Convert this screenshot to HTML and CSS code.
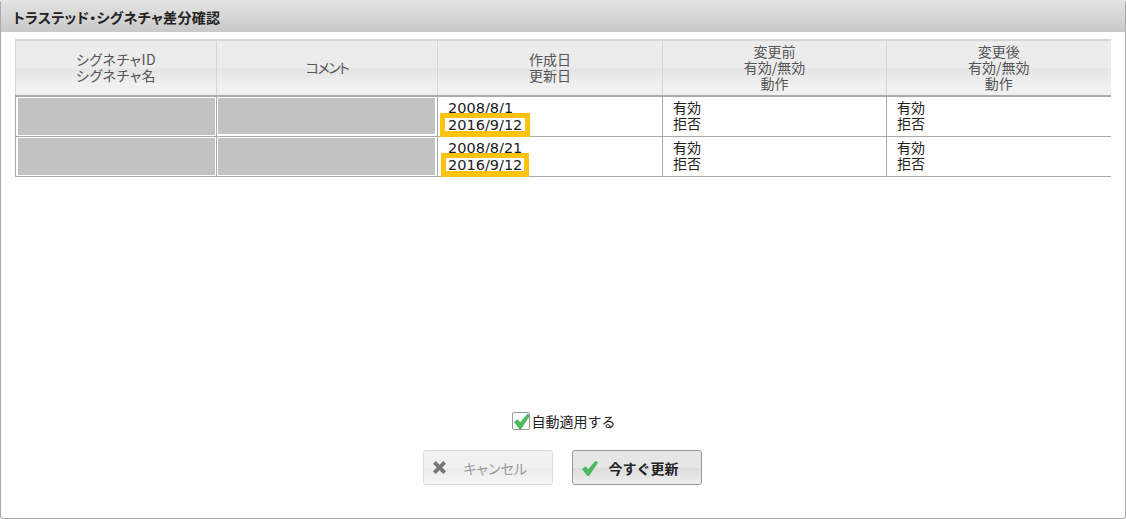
FILE: index.html
```html
<!DOCTYPE html>
<html lang="ja">
<head>
    <meta charset="UTF-8">
    <title>トラステッド・シグネチャ差分確認</title>
    <link rel="stylesheet" href="styles.css">
</head>
<body>
    <div class="dialog">
        <div class="dialog-title">トラステッド・シグネチャ差分確認</div>
        <div class="dialog-body">
            <table class="diff-table">
                <colgroup>
                    <col class="col-id">
                    <col class="col-comment">
                    <col class="col-date">
                    <col class="col-before">
                    <col class="col-after">
                </colgroup>
                <thead>
                    <tr>
                        <th class="th-id">シグネチャID<br>シグネチャ名</th>
                        <th class="th-comment">コメント</th>
                        <th>作成日<br>更新日</th>
                        <th>変更前<br>有効/無効<br>動作</th>
                        <th>変更後<br>有効/無効<br>動作</th>
                    </tr>
                </thead>
                <tbody>
                    <tr>
                        <td class="masked"><div class="mask"></div></td>
                        <td class="masked masked-comment"><div class="mask mask-short"></div></td>
                        <td><span class="date">2008/8/1</span><br><span class="date mark">2016/9/12</span></td>
                        <td>有効<br>拒否</td>
                        <td>有効<br>拒否</td>
                    </tr>
                    <tr>
                        <td class="masked"><div class="mask"></div></td>
                        <td class="masked masked-comment"><div class="mask"></div></td>
                        <td><span class="date">2008/8/21</span><br><span class="date mark mark-narrow">2016/9/12</span></td>
                        <td>有効<br>拒否</td>
                        <td>有効<br>拒否</td>
                    </tr>
                </tbody>
            </table>
            <label class="auto-apply">
                <span class="checkbox">
                    <svg class="check" viewBox="0 0 20 20"><path d="M1 11l4-3 3 3.500L16 2l3 2-10 15H7z"/></svg>
                </span>自動適用する
            </label>
            <div class="button-row">
                <button class="btn btn-cancel" disabled>
                    <svg class="icon-x" viewBox="0 0 12 12"><path d="M0 2.500L2.500 0 6 3.500 9.500 0 12 2.500 8.500 6 12 9.500 9.500 12 6 8.500 2.500 12 0 9.500 3.500 6z"/></svg>
                    キャンセル
                </button>
                <button class="btn btn-update">
                    <svg class="check" viewBox="0 0 20 20"><path d="M1 11l4-3 3 3.500L16 2l3 2-10 15H7z"/></svg>
                    今すぐ更新
                </button>
            </div>
        </div>
    </div>
</body>
</html>
```

FILE: styles.css
```css
html, body {
    height: 100%;
}
body {
    margin: 0;
    background: #fff;
    color: #222;
    font-family: "Noto Sans CJK JP", sans-serif;
    font-size: 14px;
}
.dialog {
    box-sizing: border-box;
    height: 519px;
    width: 1126px;
    display: flex;
    flex-direction: column;
    border: 1px solid #aaa;
    border-top: none;
    border-radius: 3px;
}
.dialog-title {
    height: 32px;
    line-height: 35px;
    padding-left: 12px;
    flex: none;
    font-size: 14px;
    font-weight: bold;
    font-feature-settings: "palt";
    letter-spacing: 0.300px;
    color: #222;
    background: linear-gradient(#e4e4e4, #c8c8c8);
}
.dialog-body {
    flex: 1;
    display: flex;
    flex-direction: column;
    padding: 7px 16px 33px 14px;
}
.diff-table {
    align-self: flex-start;
    width: 1095px;
    table-layout: fixed;
    border-collapse: collapse;
    line-height: 16px;
}
.col-id { width: 201px; }
.col-comment { width: 221px; }
.col-date { width: 225px; }
.col-before { width: 224px; }
.col-after { width: 224px; }
.diff-table th {
    height: 52px;
    padding: 0 0 2px;
    font-size: 14px;
    font-weight: normal;
    font-feature-settings: "palt";
    color: #555;
    border: 1px solid #d6d6d6;
    border-top-width: 2px;
    border-right: none;
    border-bottom: 2px solid #aaa;
    background: linear-gradient(#ececec 50%, #e4e4e4 52%, #f0f0f0 80%);
}
.diff-table th.th-id {
    letter-spacing: 0.500px;
}
.diff-table th.th-comment {
    letter-spacing: -1.500px;
}
.diff-table td {
    height: 40px;
    padding: 2px 10px 0;
    box-sizing: border-box;
    vertical-align: top;
    border-left: 1px solid #aaa;
    border-bottom: 1px solid #aaa;
}
.diff-table td.masked {
    padding: 1px 1px 1px 2px;
}
.diff-table td.masked-comment {
    padding: 1px 2px 1px 1px;
}
.mask {
    height: 37px;
    background: #c2c2c2;
}
.mask-short {
    height: 36px;
}
.date {
    font-family: "DejaVu Sans", sans-serif;
    font-size: 14.500px;
}
.mark {
    position: relative;
}
.mark::after {
    content: "";
    position: absolute;
    left: -8px;
    right: -8px;
    top: -4px;
    bottom: -4px;
    border: 5px solid #ffc30f;
    border-bottom-width: 6px;
}
.mark-narrow::after {
    left: -7px;
    right: -7px;
}
.auto-apply {
    margin-top: auto;
    margin-left: 3px;
    align-self: center;
    display: flex;
    align-items: center;
    font-size: 14px;
    color: #222;
}
.checkbox {
    position: relative;
    box-sizing: border-box;
    width: 18px;
    height: 18px;
    margin-right: 2px;
    background: #fff;
    border: 1px solid #999;
    border-radius: 2px;
}
.checkbox .check {
    position: absolute;
    left: 0;
    top: -1px;
}
.check {
    width: 18px;
    height: 18px;
    fill: #4cbb5f;
}
.button-row {
    display: flex;
    justify-content: center;
    gap: 19px;
    margin-top: 19px;
}
.btn {
    box-sizing: border-box;
    width: 130px;
    height: 35px;
    display: flex;
    align-items: center;
    padding: 0 0 0 8px;
    border-radius: 3px;
    font-family: "Noto Sans CJK JP", sans-serif;
    font-size: 14px;
}
.btn-cancel {
    gap: 18px;
    padding-left: 9px;
    color: #999;
    border: 1px solid #ddd;
    font-feature-settings: "palt";
    background: linear-gradient(#f1f1f1 50%, #ececec 52%, #f6f6f6);
}
.icon-x {
    width: 13px;
    height: 13px;
    fill: #777;
}
.btn-update {
    gap: 10px;
    font-weight: bold;
    color: #222;
    border: 1px solid #999;
    background: linear-gradient(#e6e6e6 50%, #dcdcdc 52%, #eeeeee);
}
```
